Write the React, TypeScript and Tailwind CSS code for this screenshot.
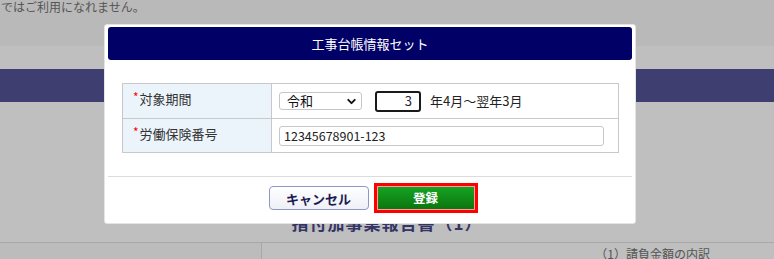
import { ChevronDown } from "lucide-react";

const jp = "font-['Noto_Sans_CJK_JP','Noto_Sans',sans-serif]";

function Label({ text }: { text: string }) {
  return (
    <div className="flex items-start pl-[10px] pt-[6px] text-[13px] text-[#333] leading-[18px]">
      <span className="text-[#ff0000] text-[12px] leading-[12px] mt-[1px] mr-[1px]">*</span>
      <span>{text}</span>
    </div>
  );
}

export default function App() {
  return (
    <div className={`relative w-[774px] h-[259px] overflow-hidden bg-[#bfbfbf] ${jp}`}>
      {/* Page behind the dialog (dimmed) */}
      <div className="flex flex-col">
        <div className="h-[46px] bg-[#b9b9b9] px-[1px] text-[12px] leading-[14px] text-[#555]">
          ではご利用になれません。
        </div>
        <div className="h-[23px] bg-[#bfbfbf]" />
        <div className="h-[33px] bg-[#3e3e70]" />
        <div className="h-[140px] flex items-end justify-center pb-[8px]">
          <span className="text-[17px] font-bold text-[#353565] leading-[22px] tracking-[1px]">
            指付加事業報告書（1）
          </span>
        </div>
        <div className="h-[17px] border-t border-[#a8a8a8] flex">
          <div className="w-[262px] border-r border-[#a8a8a8] bg-[#bcbcbc]" />
          <div className="flex-1 flex justify-end pr-[64px] pt-[4px] text-[12px] leading-[14px] text-[#555]">
            （1）請負金額の内訳
          </div>
        </div>
      </div>

      {/* Dialog */}
      <div className="absolute left-[104px] top-[24px] w-[532px] h-[200px] bg-white border border-[#e4e4e4] rounded-[3px] px-[3px] pt-[2px] flex flex-col">
        <div className="h-[33px] bg-[#000066] rounded-[3px] flex items-center justify-center text-white text-[13px]">
          工事台帳情報セット
        </div>

        <div className="pl-[14px] pr-[14px] pt-[23px]">
          <div className="w-[497px] border border-[#c8c8c8] grid grid-cols-[149px_1fr]">
            <div className="h-[35px] bg-[#ebf3fb] border-r border-b border-[#c8c8c8]">
              <Label text="対象期間" />
            </div>
            <div className="h-[35px] border-b border-[#c8c8c8] flex items-center pl-[7px] text-[13px] text-[#222]">
              <div className="w-[83px] h-[18px] border border-[#c6c6c6] rounded-[3px] flex items-center justify-between pl-[7px] pr-[3px] text-[13px] leading-[16px] text-[#111]">
                <span>令和</span>
                <ChevronDown size={13} strokeWidth={3.5} className="text-[#111]" />
              </div>
              <div className="ml-[13px] w-[46px] h-[21px] border-2 border-[#1a1a1a] rounded-[3px] flex items-center justify-end pr-[7px] text-[13px] leading-[16px] text-[#223]">
                3
              </div>
              <span className="ml-[9px] leading-[16px]">年4月～翌年3月</span>
            </div>
            <div className="h-[33px] bg-[#ebf3fb] border-r border-[#c8c8c8]">
              <Label text="労働保険番号" />
            </div>
            <div className="h-[33px] flex items-center pl-[7px]">
              <div className="w-[325px] h-[20px] border border-[#c8c8c8] rounded-[3px] flex items-center pl-[4px] text-[12.5px] leading-[16px] text-[#222]">
                12345678901-123
              </div>
            </div>
          </div>
        </div>

        <div className="mt-[23px] border-t border-[#dcdcdc]" />

        <div className="flex justify-center items-center gap-[5px] pt-[6px] pl-[6px]">
          <button className="w-[100px] h-[24px] rounded-[4px] border border-[#8c98c8] bg-gradient-to-b from-white to-[#eef0f8] text-[13px] font-bold text-[#1c1c50] leading-none">
            キャンセル
          </button>
          <div className="w-[104px] h-[30px] border-[3px] border-[#ff0000] bg-[#ff0000] flex">
            <button className="flex-1 bg-gradient-to-b from-[#17a323] to-[#0b760e] border border-[#f3a0a0] text-white text-[12.5px] font-bold leading-none">
              登録
            </button>
          </div>
        </div>
      </div>
    </div>
  );
}
